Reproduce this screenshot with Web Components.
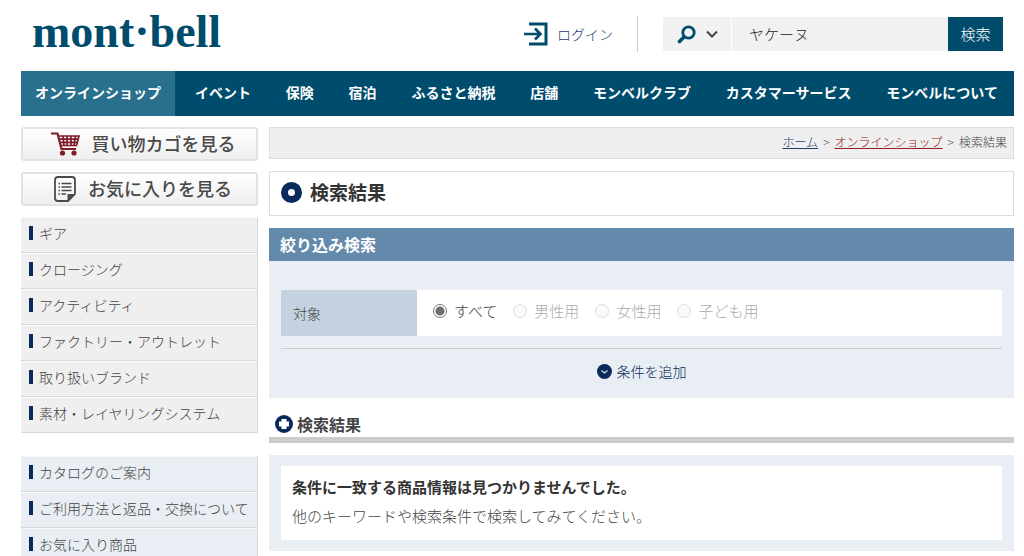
<!DOCTYPE html>
<html lang="ja">
<head>
<meta charset="utf-8">
<meta name="viewport" content="width=device-width, initial-scale=1">
<title>mont-bell 検索結果</title>
<style>
  :root {
    --navy: #0a2a5c;
    --teal: #004c6d;
    --text: #444;
    --pale: #e8eef3;
    --grey: #efefef;
    --line: #ddd;
  }
  html { scrollbar-width: none; }
  body {
    margin: 0;
    background: #fff;
    color: var(--text);
    font: 300 14px/20px "Noto Sans CJK JP", sans-serif;
  }
</style>
</head>
<body>
<mb-page>
  <mb-header slot="header"></mb-header>
  <mb-nav slot="header"></mb-nav>

  <mb-side-button slot="side" href="#cart" icon="cart">買い物カゴを見る</mb-side-button>
  <mb-side-button slot="side" href="#favorites" icon="note">お気に入りを見る</mb-side-button>
  <mb-side-menu slot="side">
    <mb-side-item href="#gear">ギア</mb-side-item>
    <mb-side-item href="#clothing">クロージング</mb-side-item>
    <mb-side-item href="#activity">アクティビティ</mb-side-item>
    <mb-side-item href="#outlet">ファクトリー・アウトレット</mb-side-item>
    <mb-side-item href="#brand">取り扱いブランド</mb-side-item>
    <mb-side-item href="#material">素材・レイヤリングシステム</mb-side-item>
  </mb-side-menu>
  <mb-side-menu slot="side" tone="blue">
    <mb-side-item href="#catalog">カタログのご案内</mb-side-item>
    <mb-side-item href="#guide">ご利用方法と返品・交換について</mb-side-item>
    <mb-side-item href="#wish">お気に入り商品</mb-side-item>
  </mb-side-menu>

  <mb-breadcrumb></mb-breadcrumb>
  <mb-page-title>検索結果</mb-page-title>
  <mb-filter></mb-filter>
  <mb-section-title>検索結果</mb-section-title>
  <mb-result>
    <span slot="lead">条件に一致する商品情報は見つかりませんでした。</span>
    他のキーワードや検索条件で検索してみてください。
  </mb-result>
</mb-page>

<script>
  const define = (name, html, setup) => {
    const template = document.createElement('template');
    template.innerHTML = html;
    customElements.define(name, class extends HTMLElement {
      constructor() {
        super();
        this.attachShadow({ mode: 'open' }).append(template.content.cloneNode(true));
      }
      connectedCallback() {
        if (setup) setup(this, this.shadowRoot);
      }
    });
  };

  define('mb-page', `
    <style>
      :host { display: block; padding: 0 10px 0 21px; }
      .columns { display: grid; grid-template-columns: 237px minmax(0, 1fr); gap: 11px; padding-top: 11px; align-items: start; }
      aside, main { display: flex; flex-direction: column; gap: 11px; min-width: 0; }
      main { gap: 12px; }
    </style>
    <slot name="header"></slot>
    <div class="columns">
      <aside><slot name="side"></slot></aside>
      <main><slot></slot></main>
    </div>
  `);

  define('mb-header', `
    <style>
      :host { display: flex; align-items: flex-start; justify-content: space-between; height: 71px; padding: 0 11px; box-sizing: border-box; }
      a { text-decoration: none; }
      .logo { color: var(--teal); font: bold 46px/64px "Liberation Serif", serif; }
      .tools { display: flex; align-items: center; padding-top: 16px; }
      .login { display: flex; align-items: center; gap: 9px; padding-right: 24px; height: 36px; border-right: 1px solid #ccc; color: #24406e; }
      form { display: flex; height: 34px; margin-left: 25px; font-size: 15px; }
      button, input { border: 0; margin: 0; border-radius: 0; font: inherit; box-sizing: border-box; }
      .kind { display: flex; align-items: center; justify-content: center; gap: 10px; width: 68px; padding: 0; background: #f1f1f1; }
      input { width: 216px; margin-left: 1px; padding: 0 17px; background: #f1f1f1; color: #222; outline: 0; }
      .go { width: 55px; padding: 0; background: var(--teal); color: #fff; }
    </style>
    <a class="logo" href="#home">mont·bell</a>
    <div class="tools">
      <a class="login" href="#login">
        <svg width="24" height="24" viewBox="0 0 24 24" fill="none" stroke="#004c6d" aria-hidden="true">
          <path d="M5 2H22V22H5" stroke-width="3"/>
          <path d="M0 12H16M11 6.500L16.500 12L11 17.500" stroke-width="2.600"/>
        </svg>
        ログイン
      </a>
      <form onsubmit="return false">
        <button class="kind" type="button" aria-label="検索対象">
          <svg width="19" height="19" viewBox="0 0 19 19" fill="none" stroke="#004c6d" aria-hidden="true">
            <circle cx="11.500" cy="7.500" r="5.700" stroke-width="2.800"/>
            <path d="M6.500 12.500L2.500 16.500" stroke-width="3.600" stroke-linecap="round"/>
          </svg>
          <svg width="12" height="8" viewBox="0 0 12 8" fill="none" stroke="#444" stroke-width="2" aria-hidden="true"><path d="M1 1.500L6 6.500L11 1.500"/></svg>
        </button>
        <input type="text" value="ヤケーヌ" aria-label="キーワード">
        <button class="go" type="submit">検索</button>
      </form>
    </div>
  `);

  define('mb-nav', `
    <style>
      :host { display: block; background: var(--teal); }
      nav { display: flex; height: 45px; font-weight: bold; line-height: 43px; }
      a { color: #fff; text-decoration: none; white-space: nowrap; }
      .current { padding: 0 14px; background: #296f8e; }
      ul { display: flex; flex: 1; justify-content: space-between; list-style: none; margin: 0; padding: 0 16px 0 20px; }
    </style>
    <nav>
      <a class="current" href="#shop">オンラインショップ</a>
      <ul>
        <li><a href="#event">イベント</a></li>
        <li><a href="#insurance">保険</a></li>
        <li><a href="#stay">宿泊</a></li>
        <li><a href="#furusato">ふるさと納税</a></li>
        <li><a href="#stores">店舗</a></li>
        <li><a href="#club">モンベルクラブ</a></li>
        <li><a href="#service">カスタマーサービス</a></li>
        <li><a href="#about">モンベルについて</a></li>
      </ul>
    </nav>
  `);

  const sideIcons = {
    cart: `<svg width="29" height="24" viewBox="0 0 29 24" fill="none" stroke="#7e1c28" aria-hidden="true">
      <path d="M0 1.500H6.500L10.500 17H25" stroke-width="2.200"/>
      <path d="M8 4H28L25.500 13.500H10M8.500 7.200H27M9.500 10.400H26M12 4L13 13.500M16 4V13.500M20 4V13.500M24.500 4L23 13.500" stroke-width="1.700"/>
      <circle cx="11.500" cy="21" r="2.600" fill="#7e1c28" stroke="none"/><circle cx="23" cy="21" r="2.600" fill="#7e1c28" stroke="none"/></svg>`,
    note: `<svg width="22" height="26" viewBox="0 0 22 26" fill="none" stroke="#4a4a4a" aria-hidden="true">
      <path d="M4 1H18Q21 1 21 4V18L14 25H4Q1 25 1 22V4Q1 1 4 1Z" stroke-width="1.800"/>
      <path d="M13.500 25V18H21Z" fill="#4a4a4a" stroke="none"/>
      <path d="M7.500 7.500H17.500M7.500 11H17.500M7.500 14.500H17.500M7.500 18H12M4.500 7.500H6M4.500 11H6M4.500 14.500H6M4.500 18H6" stroke-width="1.500"/></svg>`
  };

  define('mb-side-button', `
    <style>
      :host { display: block; }
      a { display: flex; align-items: center; justify-content: center; gap: 12px; height: 34px; padding-left: 7px; box-sizing: border-box; border: 2px solid #e2e2e2; border-radius: 3px;
          background: linear-gradient(#fff, #efefef); color: #4a4a4a; font-size: 18px; font-weight: 500; line-height: 26px; text-decoration: none; white-space: nowrap; }
      span { display: flex; }
      slot { display: block; padding-bottom: 2px; }
    </style>
    <a><span></span><slot></slot></a>
  `, (host, root) => {
    root.querySelector('a').href = host.getAttribute('href');
    root.querySelector('span').innerHTML = sideIcons[host.getAttribute('icon')];
  });

  define('mb-side-menu', `
    <style>
      :host { display: block; --item: var(--grey); padding-bottom: 12px; }
      :host([tone="blue"]) { --item: var(--pale); }
    </style>
    <nav><slot></slot></nav>
  `);

  define('mb-side-item', `
    <style>
      :host { display: block; }
      a { display: flex; align-items: center; gap: 6px; height: 36px; padding: 0 8px 4px; box-sizing: border-box; background: var(--item);
          border: solid #d9d9d9; border-width: 0 1px 1px 0; box-shadow: inset 0 1px #f8f8f8; color: var(--text); text-decoration: none; white-space: nowrap; }
      a::before { content: ""; width: 4px; height: 14px; background: var(--navy); }
    </style>
    <a><slot></slot></a>
  `, (host, root) => { root.querySelector('a').href = host.getAttribute('href'); });

  define('mb-breadcrumb', `
    <style>
      :host { display: block; border: 1px solid var(--line); background: var(--grey); padding: 0 6px 2px; font-size: 12px; line-height: 28px; }
      nav { display: flex; justify-content: flex-end; gap: 5px; }
      a { color: #1d3f77; }
      .hot { color: #952024; }
    </style>
    <nav aria-label="パンくず"><a href="#home">ホーム</a> &gt; <a class="hot" href="#shop">オンラインショップ</a> &gt; <span>検索結果</span></nav>
  `);

  define('mb-page-title', `
    <style>
      :host { display: block; border: 1px solid var(--line); padding: 0 11px; }
      h1 { display: flex; align-items: center; gap: 8px; margin: 0; padding-bottom: 3px; font-size: 19px; line-height: 40px; color: #333; }
      i { width: 7px; height: 7px; border: 7px solid var(--navy); border-radius: 50%; }
    </style>
    <h1><i></i><slot></slot></h1>
  `);

  define('mb-filter', `
    <style>
      :host { display: block; background: var(--pale); }
      h2 { margin: 0; padding: 0 11px 1px; background: #638aab; color: #fff; font-size: 16px; line-height: 32px; }
      .body { padding: 29px 12px 0; }
      fieldset { display: flex; border: 0; margin: 0; padding: 0; background: #fff; height: 46px; }
      .name { width: 136px; box-sizing: border-box; padding: 0 12px; background: #c4d2e0; line-height: 46px; }
      .choices { display: flex; gap: 16px; padding: 0 16px 4px; align-items: center; font-size: 15px; white-space: nowrap; }
      label { display: flex; align-items: center; gap: 7px; }
      label.off { color: #aaa; }
      input { appearance: none; width: 14px; height: 14px; margin: 0; border: 1px solid #ddd; border-radius: 50%; background: #fafafa; }
      input:checked { border: 1px solid #767676; background: radial-gradient(circle, #6e6e6e 4px, #fff 5px); }
      .more { display: flex; justify-content: center; height: 49px; margin-top: 12px; border-top: 1px solid #ccc; }
      .more button { display: flex; align-items: center; gap: 5px; border: 0; background: none; padding: 0 0 5px; font: inherit; color: var(--navy); }
    </style>
    <h2>絞り込み検索</h2>
    <div class="body">
      <fieldset aria-label="対象">
        <div class="name">対象</div>
        <div class="choices">
          <label><input type="radio" name="target" checked>すべて</label>
          <label class="off"><input type="radio" name="target" disabled>男性用</label>
          <label class="off"><input type="radio" name="target" disabled>女性用</label>
          <label class="off"><input type="radio" name="target" disabled>子ども用</label>
        </div>
      </fieldset>
      <div class="more">
        <button type="button">
          <svg width="15" height="15" viewBox="0 0 15 15" aria-hidden="true"><circle cx="7.500" cy="7.500" r="7.500" fill="#0a2a5c"/><path d="M4.500 6.500L7.500 9L10.500 6.500" fill="none" stroke="#cfd9e6" stroke-width="1.300"/></svg>
          条件を追加
        </button>
      </div>
    </div>
  `);

  define('mb-section-title', `
    <style>
      :host { display: block; border-bottom: 6px solid #ccc; padding: 0 6px; }
      h2 { display: flex; align-items: center; gap: 4px; margin: 0; padding-top: 1px; font-size: 16px; line-height: 26px; color: #444; }
    </style>
    <h2>
      <svg width="18" height="18" viewBox="0 0 18 18" aria-hidden="true"><circle cx="9" cy="9" r="9" fill="#0a2a5c"/><path d="M6.500 4H11.500V6.500H14V11.500H11.500V14H6.500V11.500H4V6.500H6.500Z" fill="#fff"/></svg>
      <slot></slot>
    </h2>
  `);

  define('mb-result', `
    <style>
      :host { display: block; background: var(--pale); padding: 11px 12px; }
      .box { background: #fff; padding: 6px 11px 10px; font-size: 15px; line-height: 29px; }
      p { margin: 0; }
      .lead { font-weight: bold; color: #333; }
    </style>
    <div class="box">
      <p class="lead"><slot name="lead"></slot></p>
      <p><slot></slot></p>
    </div>
  `);
</script>
</body>
</html>
